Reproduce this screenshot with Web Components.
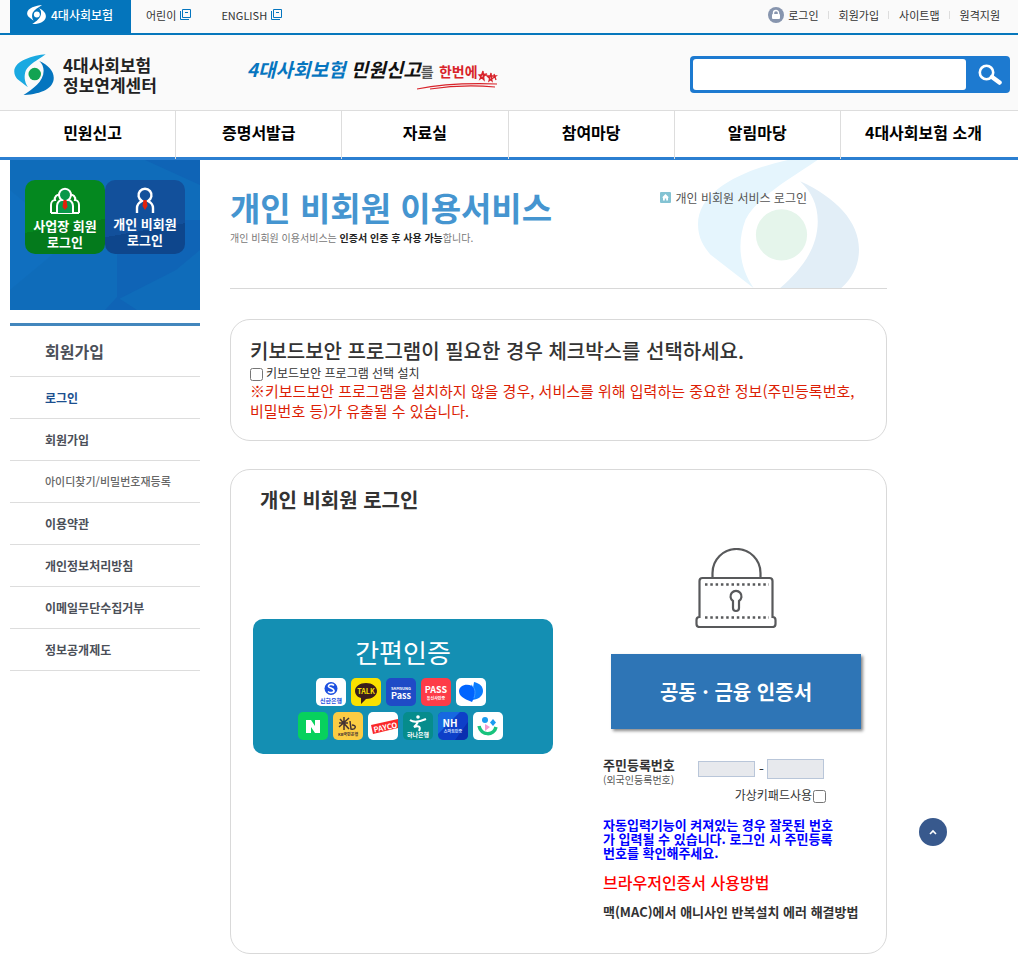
<!DOCTYPE html>
<html lang="ko">
<head>
<meta charset="utf-8">
<meta name="viewport" content="width=device-width, initial-scale=1">
<title>개인 비회원 이용서비스</title>
<style>
  body {
    margin: 0;
    background: #fff;
    color: #333;
    font-family: "Noto Sans CJK KR", "Noto Sans", sans-serif;
    font-size: 12px;
  }
  si-page-title b { color: #222; }
</style>
</head>
<body>
<si-topbar></si-topbar>
<si-header></si-header>
<si-nav></si-nav>
<si-layout>
  <si-sidebar slot="side"></si-sidebar>
  <si-page-title>
    개인 비회원 이용서비스
    <span slot="desc">개인 비회원 이용서비스는 <b>인증서 인증 후 사용 가능</b>합니다.</span>
    <span slot="path">개인 비회원 서비스 로그인</span>
  </si-page-title>
  <si-card><si-keyboard-notice></si-keyboard-notice></si-card>
  <si-card><si-login></si-login></si-card>
  <si-go-top slot="quick"></si-go-top>
</si-layout>

<script>
// base class: puts template() into an open shadow root
class SiElement extends HTMLElement {
  connectedCallback () {
    if (this.shadowRoot) return;
    const root = this.attachShadow({mode: 'open'});
    root.innerHTML = `
      <style>
        * { box-sizing: border-box; }
        h1, h2, p, ul { margin: 0; padding: 0; }
        ul { list-style: none; }
        a { color: inherit; text-decoration: none; }
        button { font: inherit; border: 0; padding: 0; cursor: pointer; }
        svg { display: block; }
        :host { display: block; box-sizing: border-box; }
      </style>
      ${this.template()}
    `;
  }
}

class SiEmblem extends SiElement {
  template () {
    return `
      <style>
        svg { width: 100%; }
        .left { fill: var(--emblem-left, #1aa9e1); }
        .right { fill: var(--emblem-right, #0475bf); }
        .dot { fill: var(--emblem-dot, #12a352); }
      </style>
      <svg viewBox="0 0 490 505" aria-hidden="true">
        <path class="left" d="M388 3C240 16 3 80 3 215c0 40 18 68 37 90l130 101c-44-66-50-137-24-206C182 128 286 76 388 3z"/>
        <path class="right" d="M310 85c106 48 177 120 177 205 0 130-150 200-371 213C228 428 363 340 363 205c0-50-20-90-53-120z"/>
        <circle class="dot" cx="254" cy="246" r="77"/>
      </svg>
    `;
  }
}

class SiTopbar extends SiElement {
  template () {
    const popup = `
      <svg width="11" height="11" viewBox="0 0 11 11" fill="none" stroke="#0475bf" aria-hidden="true">
        <path d="M2.500.5h8v8h-8zM5 3.500h3M.5 2v8.500H9"/>
      </svg>`;
    return `
      <style>
        :host {
          background: #fafafa;
          border-bottom: 2px solid #0677bc;
          font-size: 11px;
          line-height: 16px;
        }
        nav { display: flex; height: 33px; padding: 0 18px 0 10px; }
        .home {
          display: flex;
          align-items: center;
          gap: 5px;
          width: 121px;
          padding: 0 0 4px 17px;
          background: #0475bc;
          color: #fff;
          font-size: 12px;
          font-weight: 500;
        }
        .home si-emblem {
          width: 19px;
          --emblem-left: #fff;
          --emblem-right: #fff;
          --emblem-dot: #fff;
        }
        .link { display: flex; align-items: center; gap: 4px; height: 29px; margin-left: 15px; }
        .link + .link { margin-left: 30px; }
        ul { display: flex; align-items: center; height: 29px; margin-left: auto; }
        li { display: flex; align-items: center; gap: 4px; }
        li + li::before {
          content: "";
          width: 1px;
          height: 8px;
          margin: 0 6px 0 9px;
          background: #ddd;
        }
      </style>
      <nav>
        <a class="home" href="#"><si-emblem></si-emblem>4대사회보험</a>
        <a class="link" href="#">어린이 ${popup}</a>
        <a class="link" href="#">ENGLISH ${popup}</a>
        <ul>
          <li>
            <svg width="16" height="16" viewBox="0 0 16 16" aria-hidden="true">
              <circle cx="8" cy="8" r="8" fill="#8795ae"/>
              <path d="M5.500 7.500V6a2.500 2.500 0 0 1 5 0v1.500" fill="none" stroke="#fff" stroke-width="1.400"/>
              <rect x="4" y="7" width="8" height="5" rx="1" fill="#fff"/>
            </svg>
            <a href="#">로그인</a>
          </li>
          <li><a href="#">회원가입</a></li>
          <li><a href="#">사이트맵</a></li>
          <li><a href="#">원격지원</a></li>
        </ul>
      </nav>
    `;
  }
}

class SiHeader extends SiElement {
  template () {
    return `
      <style>
        :host { background: #fafafa; border-bottom: 1px solid #ddd; }
        header { display: flex; align-items: center; height: 75px; padding: 4px 8px 0 14px; }
        .logo {
          display: flex;
          align-items: center;
          gap: 9px;
          color: #222;
          font-size: 17px;
          font-weight: 700;
          line-height: 20px;
        }
        .logo si-emblem { width: 40px; }
        .logo span { width: min-content; word-break: keep-all; }
        .slogan {
          position: relative;
          margin: 0 20px 10px 90px;
          font-size: 19px;
          font-weight: 700;
          font-style: italic;
          line-height: 28px;
          color: #111;
          white-space: nowrap;
        }
        .slogan em { color: #0675bf; }
        .slogan small { font-size: 14px; font-style: normal; color: #555; }
        .slogan small + small { color: #d8232a; }
        .slogan svg { position: absolute; right: -20px; bottom: -6px; }
        form {
          display: flex;
          flex: 0 1 320px;
          height: 37px;
          margin-left: auto;
          padding: 3px 0 3px 3px;
          border-radius: 4px;
          background: #1d7ad0;
        }
        input {
          flex: 1;
          min-width: 0;
          padding: 0 8px;
          border: 0;
          border-radius: 3px;
          background: #fff;
          font: inherit;
        }
        button { width: 44px; padding-left: 4px; background: none; }
        button svg { margin: 0 auto; }
      </style>
      <header>
        <a class="logo" href="#"><si-emblem></si-emblem><span>4대사회보험 정보연계센터</span></a>
        <div class="slogan">
          <em>4대사회보험</em> 민원신고<small>를</small> <small>한번에</small>
          <svg width="82" height="24" viewBox="0 0 82 24" fill="none" stroke="#d8232a" aria-hidden="true">
            <path d="M1 22c20-4 50-6 80-5M14 22c20-3 42-4 65-2" stroke-width="1.200"/>
            <path d="M67 4l1 9-5-5 8-1-7 5zM75 6l1 8-5-5 9 0-7 5zM78 7l2 6" stroke-width="1.300"/>
          </svg>
        </div>
        <form role="search" onsubmit="return false">
          <input type="search" aria-label="검색어">
          <button aria-label="검색">
            <svg width="24" height="21" viewBox="0 0 24 21" fill="none" stroke="#fff">
              <circle cx="8.500" cy="8.500" r="6.700" stroke-width="2.600"/>
              <path d="M14 13l7.500 5.500" stroke-width="4.500" stroke-linecap="round"/>
            </svg>
          </button>
        </form>
      </header>
    `;
  }
}

class SiNav extends SiElement {
  template () {
    const items = ['민원신고', '증명서발급', '자료실', '참여마당', '알림마당', '4대사회보험 소개'];
    return `
      <style>
        :host { border-bottom: 3px solid #2b7fd1; }
        ul { display: flex; padding: 0 12px 0 10px; }
        li {
          flex: 1;
          height: 48px;
          margin-bottom: -2px;
          border-right: 1px solid #ddd;
          color: #000;
          font-size: 16px;
          font-weight: 700;
          line-height: 43px;
          text-align: center;
          white-space: nowrap;
        }
        li:last-child { border: 0; }
      </style>
      <nav><ul>${items.map(item => `<li><a href="#">${item}</a></li>`).join('')}</ul></nav>
    `;
  }
}

class SiLayout extends SiElement {
  template () {
    return `
      <style>
        :host {
          display: grid;
          grid-template-columns: 190px minmax(0, 1fr) 101px;
          gap: 30px;
          padding: 0 0 14px 10px;
        }
        main { display: flex; flex-direction: column; }
      </style>
      <slot name="side"></slot>
      <main><slot></slot></main>
      <slot name="quick"></slot>
    `;
  }
}

class SiSidebar extends SiElement {
  template () {
    const items = ['로그인', '회원가입', '아이디찾기/비밀번호재등록', '이용약관',
      '개인정보처리방침', '이메일무단수집거부', '정보공개제도'];
    return `
      <style>
        .banner {
          position: relative;
          display: flex;
          height: 150px;
          padding: 20px 15px;
          background: #0f6cba;
          color: #fff;
          font-size: 13px;
          font-weight: 700;
          line-height: 16px;
          text-align: center;
        }
        .banner > svg { position: absolute; inset: 0; width: 100%; height: 100%; }
        .banner a {
          position: relative;
          flex: 1;
          height: 74px;
          padding-top: 6px;
          border-radius: 10px;
          background: linear-gradient(170deg, #04881f 60%, #047a1c 60%);
          word-break: keep-all;
        }
        .banner a + a { background: linear-gradient(170deg, #12509b 65%, #0e468c 65%); }
        .banner a svg { margin: 0 auto 4px; }
        .banner a + a svg { margin-bottom: 2px; }
        h2 {
          margin-top: 13px;
          padding-left: 35px;
          border-top: 3px solid #4387bd;
          border-bottom: 1px solid #ddd;
          color: #4b4f58;
          font-size: 16px;
          line-height: 50px;
        }
        li {
          padding-left: 35px;
          border-bottom: 1px solid #ddd;
          color: #4b4f58;
          font-weight: 700;
          line-height: 41px;
          white-space: nowrap;
        }
        li:first-child { color: #1c4f8f; }
        li:nth-child(3) { font-size: 11px; font-weight: 500; color: #666; }
      </style>
      <div class="banner">
        <svg viewBox="0 0 190 150" preserveAspectRatio="none" aria-hidden="true">
          <path d="M107 90V60h83v30l-24 20-59 30zM107 137l20 13h-32zM135 0h55v25z" fill="#0f64b6"/>
          <path d="M0 30l60 50L0 130z" fill="#106fbf"/>
        </svg>
        <a href="#">
          <svg width="30" height="28" viewBox="0 0 30 28" fill="none" stroke="#fff" stroke-width="2" aria-hidden="true">
            <path d="M1 27v-8c0-3 2-5 4-5a4 4 0 0 1 5-5M29 27v-8c0-3-2-5-4-5a4 4 0 0 0-5-5M1 27h28" />
            <path d="M7 27v-7c0-4 3-6 5-6a6 6 0 1 1 6 0c2 0 5 2 5 6v7" fill="#08984a"/>
            <path d="M13.500 14h3l1 7-2.500 3-2.500-3z" fill="#e3210b" stroke="none"/>
          </svg>
          사업장 회원 로그인
        </a>
        <a href="#">
          <svg width="22" height="28" viewBox="0 0 22 28" fill="none" stroke="#fff" stroke-width="2.400" aria-hidden="true">
            <path d="M3 27v-5c0-4 3-6 5-7a6.500 6.500 0 1 1 6 0c2 1 5 3 5 7v5"/>
            <path d="M9.500 14h3l1 6-2.500 4-2.500-4z" fill="#e3210b" stroke="none"/>
          </svg>
          개인 비회원 로그인
        </a>
      </div>
      <h2>회원가입</h2>
      <ul>${items.map(item => `<li><a href="#">${item}</a></li>`).join('')}</ul>
    `;
  }
}

class SiPageTitle extends SiElement {
  template () {
    return `
      <style>
        :host {
          position: relative;
          display: flex;
          justify-content: space-between;
          height: 129px;
          padding: 27px 80px 0 0;
          border-bottom: 1px solid #d8d8d8;
          overflow: hidden;
          white-space: nowrap;
        }
        .watermark {
          position: absolute;
          top: -7px;
          right: 27px;
          width: 163px;
          --emblem-left: #e5f5fd;
          --emblem-right: #e2eef7;
          --emblem-dot: #e5f5eb;
        }
        .text, .path { position: relative; }
        h1 { color: #4595d0; font-size: 33px; line-height: 40px; }
        p { margin-top: 3px; color: #777; font-size: 10px; line-height: 16px; }
        .path { display: flex; align-items: center; gap: 4px; height: 20px; color: #555; }
      </style>
      <si-emblem class="watermark"></si-emblem>
      <div class="text">
        <h1><slot></slot></h1>
        <p><slot name="desc"></slot></p>
      </div>
      <div class="path">
        <svg width="11" height="11" viewBox="0 0 11 11" aria-hidden="true">
          <rect width="11" height="11" rx="1" fill="#84c3d3"/>
          <path d="M5.500 2L9 5.500H8V8.500H6.200V6.500H4.800V8.500H3V5.500H2z" fill="#fff"/>
        </svg>
        <slot name="path"></slot>
      </div>
    `;
  }
}

class SiCard extends SiElement {
  template () {
    return `
      <style>
        :host {
          margin-top: 30px;
          border: 1px solid #d9d9d9;
          border-radius: 20px;
        }
        :host(:last-of-type) { margin-top: 28px; }
      </style>
      <slot></slot>
    `;
  }
}

class SiKeyboardNotice extends SiElement {
  template () {
    return `
      <style>
        :host { padding: 17px 19px 19px; }
        h2 { font-size: 20px; font-weight: 500; line-height: 27px; }
        label { display: flex; align-items: center; gap: 3px; line-height: 16px; }
        input { width: 13px; height: 13px; margin: 4px 0 0; }
        p { color: #dc1e05; font-size: 15px; line-height: 20px; }
      </style>
      <h2>키보드보안 프로그램이 필요한 경우 체크박스를 선택하세요.</h2>
      <label><input type="checkbox">키보드보안 프로그램 선택 설치</label>
      <p>※키보드보안 프로그램을 설치하지 않을 경우, 서비스를 위해 입력하는 중요한 정보(주민등록번호, 비밀번호 등)가 유출될 수 있습니다.</p>
    `;
  }
}

// app icons of the simple-auth providers, each on a 30x28 canvas
const TILES = {
  shinhan: ['#fff', `<circle cx="15" cy="10.500" r="6.500" fill="#1b4fe0"/>
    <path d="M18 7.500c-2-2-6-1-5.500 1 .5 1.700 5 1.500 5.500 4 .3 2-4 3-6 1" fill="none" stroke="#fff" stroke-width="1.600"/>
    <text x="15" y="25" font-size="6" fill="#1b4fe0">신한은행</text>`],
  talk: ['#fae100', `<path d="M15 5c6 0 11 3.500 11 8s-5 8-11 8l-5 5v-6c-4-1-6-4-6-7 0-4.500 5-8 11-8z" fill="#3a1d1d"/>
    <text x="15" y="16" font-size="7" fill="#fae100">TALK</text>`],
  samsung: ['#1f4bc6', `<text x="15" y="12" font-size="4" fill="#fff">SAMSUNG</text>
    <text x="15" y="21" font-size="9" fill="#fff">Pass</text>`],
  pass: ['#fd3c48', `<text x="15" y="15" font-size="9" fill="#fff">PASS</text>
    <text x="15" y="22" font-size="4" fill="#fff">통신사인증</text>`],
  toss: ['#fff', `<path d="M18 4c5 1 9 4 9 9 0 5-5 9-12 9z" fill="#0a7cff"/>
    <path d="M3 13c0-5 7-8 13-5 4 3 4 8 0 16C8 21 3 18 3 13z" fill="#0064ff"/>
    <path d="M15 7c4 2 5 7 3 13" fill="none" stroke="#3b9bff"/>`],
  naver: ['#07d15d', `<path d="M8 21V8h5l4 6V8h5v13h-5l-4-6v6z" fill="#fff"/>`],
  kb: ['#fbcc44', `<path d="M7 7l9 10M16 6L6 15M11 5v13M6 11h9M17 9l1 8c5 1 6-4 1-4" fill="none" stroke="#433" stroke-width="1.500"/>
    <text x="15" y="24" font-size="4" fill="#433">KB국민은행</text>`],
  payco: ['#fff', `<path d="M3 13l27-6v9L5 22z" fill="#fa2828"/>
    <text x="18" y="18" font-size="7.500" fill="#fff" transform="rotate(-12 18 18)">PAYCO</text>`],
  hana: ['#068c8c', `<circle cx="15" cy="5" r="1.800" fill="#fff"/>
    <path d="M7 8c4 3 9 2 16-1M15 10c-1 2-2 3-4 5 5-2 7 0 5 4" fill="none" stroke="#fff" stroke-width="2"/>
    <text x="15" y="25" font-size="6" fill="#fff">하나은행</text>`],
  nh: ['#0e3fc8', `<path d="M0 0h22L0 22z" fill="#1768e0"/><path d="M17 28L30 10v18z" fill="#0a2fb0"/>
    <text x="12" y="15" font-size="10" fill="#fff">NH</text>
    <text x="15" y="21" font-size="4" fill="#cfe0ff">스마트인증</text>`],
  smile: ['#fff', `<circle cx="12" cy="8" r="3" fill="#1a9bf0"/><path d="M20 7l3 3.500-3 3.500-3-3.500z" fill="#1a9bf0"/>
    <path d="M12 12l5 3-5 4z" fill="#f59bd0"/>
    <path d="M6 14c2 10 15 10 17 1" fill="none" stroke="#18c37d" stroke-width="3.500"/>`]
};

class SiAuthTile extends SiElement {
  template () {
    const [color, art] = TILES[this.getAttribute('name')];
    return `
      <style>
        :host { border-radius: 5px; overflow: hidden; background: ${color}; }
        text { font-weight: 700; text-anchor: middle; }
      </style>
      <svg width="30" height="28" viewBox="0 0 30 28">${art}</svg>
    `;
  }
}

class SiLogin extends SiElement {
  tiles (names) {
    return `<div class="tiles">${names.map(name => `<si-auth-tile name="${name}"></si-auth-tile>`).join('')}</div>`;
  }

  template () {
    return `
      <style>
        :host { padding: 14px 17px 32px 22px; }
        h2 { padding-left: 7px; font-size: 20px; line-height: 32px; }
        .columns { display: flex; gap: 50px; margin-top: 32px; }
        .simple {
          flex: 0 1 300px;
          height: 135px;
          margin-top: 71px;
          border-radius: 10px;
          background: #148fb3;
          color: #fff;
          font-size: 26px;
          line-height: 38px;
        }
        .simple > span { display: block; padding-bottom: 7px; }
        .tiles { display: flex; justify-content: center; gap: 5px; padding-right: 5px; }
        .tiles + .tiles { margin-top: 6px; }
        .cert { flex: 0 1 266px; min-width: 0; }
        .lock { margin: 0 auto; }
        .joint {
          display: block;
          width: 250px;
          height: 75px;
          margin: 26px auto 27px;
          background: #2e75b6;
          box-shadow: 2px 2px 3px #888;
          color: #fff;
          font-size: 20px;
          font-weight: 700;
        }
        .number { display: flex; align-items: flex-start; }
        .label { width: 95px; font-size: 10px; line-height: 14px; color: #555; }
        .label b { display: block; font-size: 13px; line-height: 17px; color: #333; }
        .fields { display: flex; align-items: center; gap: 4px; height: 26px; font-size: 14px; }
        .fields input {
          width: 57px;
          height: 16px;
          padding: 0 4px;
          border: 1px solid #b9c6d9;
          background: #e7e9ed;
        }
        .fields span + input { height: 20px; margin-left: -1px; }
        .keypad {
          display: flex;
          justify-content: flex-end;
          align-items: center;
          padding-right: 43px;
          line-height: 16px;
        }
        .keypad input { width: 13px; height: 13px; margin: 3px 0 0 1px; }
        .warn {
          max-width: 240px;
          margin-top: 15px;
          color: #00f;
          font-size: 13px;
          font-weight: 700;
          line-height: 14px;
        }
        .guide { margin-top: 12px; color: #f00; font-size: 16px; font-weight: 500; line-height: 20px; }
        .mac { margin-top: 11px; color: #333; font-size: 13px; font-weight: 700; line-height: 18px; white-space: nowrap; }
      </style>
      <h2>개인 비회원 로그인</h2>
      <div class="columns">
        <button class="simple">
          <span>간편인증</span>
          ${this.tiles(['shinhan', 'talk', 'samsung', 'pass', 'toss'])}
          ${this.tiles(['naver', 'kb', 'payco', 'hana', 'nh', 'smile'])}
        </button>
        <div class="cert">
          <svg class="lock" width="82" height="80" viewBox="0 0 82 80" fill="none" stroke="#58595b" stroke-width="2.200" aria-hidden="true">
            <path d="M17.500 30V25a24 24 0 0 1 48 0v5"/>
            <path d="M4.500 69V33q0-3 3-3h67q3 0 3 3v36q3 0 3 3v4q0 3-3 3h-73q-3 0-3-3v-4q0-3 3-3z"/>
            <path d="M10 36.500h64M10 69.500h64" stroke-dasharray="2.500 2.800" stroke-width="2.400"/>
            <path d="M38 53a5.500 5.500 0 1 1 6 0v7a3 3 0 0 1-6 0z"/>
          </svg>
          <button class="joint">공동 · 금융 인증서</button>
          <div class="number">
            <label class="label" for="front"><b>주민등록번호</b>(외국인등록번호)</label>
            <div class="fields">
              <input id="front" maxlength="6"><span>-</span><input type="password" maxlength="7" aria-label="주민등록번호 뒷자리">
            </div>
          </div>
          <label class="keypad">가상키패드사용<input type="checkbox"></label>
          <p class="warn">자동입력기능이 켜져있는 경우 잘못된 번호가 입력될 수 있습니다. 로그인 시 주민등록번호를 확인해주세요.</p>
          <p class="guide"><a href="#">브라우저인증서 사용방법</a></p>
          <p class="mac"><a href="#">맥(MAC)에서 애니사인 반복설치 에러 해결방법</a></p>
        </div>
      </div>
    `;
  }
}

class SiGoTop extends SiElement {
  template () {
    return `
      <style>
        :host { align-self: end; padding: 0 0 108px 2px; }
        button { display: block; width: 28px; height: 28px; border-radius: 50%; background: #38598d; }
        svg { margin: 0 auto; }
      </style>
      <button aria-label="맨 위로">
        <svg width="8" height="6" viewBox="0 0 8 6" fill="none" stroke="#fff" stroke-width="1.600"><path d="M1 5l3-3 3 3"/></svg>
      </button>
    `;
  }
}

customElements.define('si-emblem', SiEmblem);
customElements.define('si-topbar', SiTopbar);
customElements.define('si-header', SiHeader);
customElements.define('si-nav', SiNav);
customElements.define('si-layout', SiLayout);
customElements.define('si-sidebar', SiSidebar);
customElements.define('si-page-title', SiPageTitle);
customElements.define('si-card', SiCard);
customElements.define('si-keyboard-notice', SiKeyboardNotice);
customElements.define('si-auth-tile', SiAuthTile);
customElements.define('si-login', SiLogin);
customElements.define('si-go-top', SiGoTop);
</script>
</body>
</html>
